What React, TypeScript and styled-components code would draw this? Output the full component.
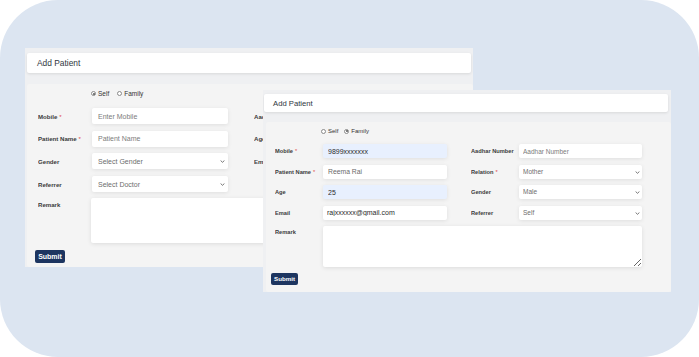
import React from "react";
import styled, { createGlobalStyle } from "styled-components";

const GlobalStyle = createGlobalStyle`
    html, body {
        margin: 0;
        padding: 0;
        background: #ffffff;
    }
    * {
        box-sizing: border-box;
    }
`;

const FONT = `"Liberation Sans", Arial, sans-serif`;

const Stage = styled.div`
    position: relative;
    width: 699px;
    height: 357px;
    overflow: hidden;
    background: #ffffff;
    font-family: ${FONT};
`;

const Backdrop = styled.div`
    width: 699px;
    height: 357px;
    border-radius: 58px;
    background: #dce5f1;
`;

const Window = styled.div<{ $left: number; $top: number; $width: number; $height: number }>`
    position: absolute;
    left: ${(p) => p.$left}px;
    top: ${(p) => p.$top}px;
    width: ${(p) => p.$width}px;
    height: ${(p) => p.$height}px;
    background: #eff0f2;
    display: flex;
    flex-direction: column;
    overflow: hidden;
`;

const Header = styled.div<{ $size: number; $height: number; $pad: number; $margin: string }>`
    flex: none;
    height: ${(p) => p.$height}px;
    margin: ${(p) => p.$margin};
    padding-left: ${(p) => p.$pad}px;
    display: flex;
    align-items: center;
    background: #ffffff;
    border-radius: 2px;
    box-shadow: 0 1px 3px rgba(0, 0, 0, 0.1);
    color: #2f3640;
    font-size: ${(p) => p.$size}px;
`;

const Body = styled.div<{ $margin: string; $pad: string }>`
    flex: 1;
    margin: ${(p) => p.$margin};
    padding: ${(p) => p.$pad};
    background: #f4f4f4;
    border-radius: 2px;
    display: flex;
    flex-direction: column;
    align-items: flex-start;
`;

const RadioRow = styled.div<{ $indent: number; $size: number; $gap: number }>`
    display: flex;
    align-items: center;
    gap: ${(p) => p.$gap}px;
    padding-left: ${(p) => p.$indent}px;
    font-size: ${(p) => p.$size}px;
    color: #333;
`;

const RadioOption = styled.label`
    display: flex;
    align-items: center;
    gap: 2px;
`;

const RadioDot = styled.span<{ $checked: boolean; $d: number }>`
    width: ${(p) => p.$d}px;
    height: ${(p) => p.$d}px;
    border-radius: 50%;
    border: 0.7px solid #8a8a8a;
    background: #fff;
    display: flex;
    align-items: center;
    justify-content: center;
    &::after {
        content: "";
        width: ${(p) => p.$d - 3}px;
        height: ${(p) => p.$d - 3}px;
        border-radius: 50%;
        background: ${(p) => (p.$checked ? "#555" : "transparent")};
    }
`;

const FormGrid = styled.div<{ $cols: string; $rowH: number; $rowGap: number; $indent: number; $top: number }>`
    display: grid;
    grid-template-columns: ${(p) => p.$cols};
    grid-auto-rows: ${(p) => p.$rowH}px;
    row-gap: ${(p) => p.$rowGap}px;
    padding-left: ${(p) => p.$indent}px;
    margin-top: ${(p) => p.$top}px;
    align-items: stretch;
`;

const Label = styled.div<{ $size: number }>`
    font-size: ${(p) => p.$size}px;
    font-weight: 700;
    color: #3b3b3b;
    white-space: nowrap;
    overflow: hidden;
    align-self: center;
`;

const RemarkLabel = styled(Label)`
    align-self: start;
    padding-top: 3px;
`;

const Req = styled.span`
    color: #e0464a;
    font-weight: 400;
    margin-left: 2px;
`;

const Field = styled.input<{ $size: number; $filled?: boolean; $pad: number; $tone?: string }>`
    width: 100%;
    height: 100%;
    border: none;
    outline: none;
    border-radius: 2px;
    padding: 0 ${(p) => p.$pad}px;
    font-family: ${FONT};
    font-size: ${(p) => p.$size}px;
    color: #2b2b2b;
    background: ${(p) => (p.$filled ? "#e8f0fe" : "#ffffff")};
    box-shadow: 0 1px 4px rgba(0, 0, 0, 0.09);
    &::placeholder {
        color: ${(p) => p.$tone ?? "#7c7c7c"};
    }
`;

const SelectWrap = styled.div`
    position: relative;
    display: flex;
    align-items: center;
    background: #ffffff;
    border-radius: 2px;
    box-shadow: 0 1px 4px rgba(0, 0, 0, 0.09);
`;

const Select = styled.select<{ $size: number; $pad: number }>`
    appearance: none;
    width: 100%;
    height: 100%;
    border: none;
    outline: none;
    padding: 1px ${(p) => p.$pad}px 0;
    line-height: 1;
    font-family: ${FONT};
    font-size: ${(p) => p.$size}px;
    color: #6d6d6d;
    background: transparent;
`;

const Chevron = styled.svg<{ $right: number }>`
    position: absolute;
    right: ${(p) => p.$right}px;
    top: calc(50% - 1px);
    pointer-events: none;
`;

const Remark = styled.textarea`
    height: 100%;
    border: none;
    outline: none;
    border-radius: 2px;
    background: #ffffff;
    box-shadow: 0 1px 4px rgba(0, 0, 0, 0.1);
    resize: vertical;
`;

const Submit = styled.button<{ $size: number; $w: number; $h: number; $left: number; $top: number }>`
    width: ${(p) => p.$w}px;
    height: ${(p) => p.$h}px;
    margin: ${(p) => p.$top}px 0 0 ${(p) => p.$left}px;
    border: none;
    border-radius: 2px;
    background: #1d3560;
    color: #ffffff;
    font-family: ${FONT};
    font-weight: 700;
    font-size: ${(p) => p.$size}px;
    padding: 0;
`;

interface SelectBoxProps {
    value: string;
    size: number;
    pad: number;
    arrowRight: number;
}

const SelectBox = (props: SelectBoxProps): JSX.Element => (
    <SelectWrap>
        <Select $size={props.size} $pad={props.pad} defaultValue={props.value}>
            <option>{props.value}</option>
        </Select>
        <Chevron $right={props.arrowRight} width="5" height="3" viewBox="0 0 5 3">
            <path d="M0.6 0.5 L2.5 2.3 L4.4 0.5" fill="none" stroke="#666" strokeWidth="0.9" />
        </Chevron>
    </SelectWrap>
);

// the "Self" form, partly hidden behind the second window
const BackForm = (): JSX.Element => {
    const ls = 6.1;
    const fs = 7;
    return (
        <Window $left={25} $top={48} $width={448} $height={219}>
            <Header $size={8.4} $height={20} $pad={10} $margin="5px 2px 0 2px">
                Add Patient
            </Header>
            <Body $margin="11px 0 0 2px" $pad="6px 0 0 0">
                <RadioRow $indent={64} $size={6.5} $gap={8}>
                    <RadioOption>
                        <RadioDot $checked $d={5} />
                        Self
                    </RadioOption>
                    <RadioOption>
                        <RadioDot $checked={false} $d={5} />
                        Family
                    </RadioOption>
                </RadioRow>
                <FormGrid $cols="54px 136px 26px 54px 136px" $rowH={16} $rowGap={6.7} $indent={11} $top={11}>
                    <Label $size={ls}>
                        Mobile<Req>*</Req>
                    </Label>
                    <Field $size={fs} $pad={6} placeholder="Enter Mobile" />
                    <span />
                    <Label $size={ls}>Aadhar Number</Label>
                    <Field $size={fs} $pad={6} placeholder="Aadhar Number" />

                    <Label $size={ls}>
                        Patient Name<Req>*</Req>
                    </Label>
                    <Field $size={fs} $pad={6} placeholder="Patient Name" />
                    <span />
                    <Label $size={ls}>Age</Label>
                    <Field $size={fs} $pad={6} placeholder="Age" />

                    <Label $size={ls}>Gender</Label>
                    <SelectBox value="Select Gender" size={fs} pad={6} arrowRight={3} />
                    <span />
                    <Label $size={ls}>Email</Label>
                    <Field $size={fs} $pad={6} placeholder="Email" />

                    <Label $size={ls}>Referrer</Label>
                    <SelectBox value="Select Doctor" size={fs} pad={6} arrowRight={3} />
                </FormGrid>
                <FormGrid $cols="53px 354px" $rowH={45} $rowGap={0} $indent={11} $top={6}>
                    <RemarkLabel $size={ls}>Remark</RemarkLabel>
                    <Remark />
                </FormGrid>
                <Submit $size={7} $w={30} $h={13} $left={8} $top={7}>
                    Submit
                </Submit>
            </Body>
        </Window>
    );
};

// the "Family" form in front
const FrontForm = (): JSX.Element => {
    const ls = 5.7;
    const fs = 7;
    return (
        <Window $left={263} $top={90} $width={408} $height={202}>
            <Header $size={7.7} $height={18} $pad={9} $margin="4px 3px 0 1px">
                Add Patient
            </Header>
            <Body $margin="10px 0 0 3px" $pad="6px 0 0 0">
                <RadioRow $indent={55} $size={6} $gap={6}>
                    <RadioOption>
                        <RadioDot $checked={false} $d={5} />
                        Self
                    </RadioOption>
                    <RadioOption>
                        <RadioDot $checked $d={5} />
                        Family
                    </RadioOption>
                </RadioRow>
                <FormGrid $cols="48px 124px 24px 48px 123px" $rowH={14} $rowGap={6.5} $indent={9} $top={10}>
                    <Label $size={ls}>
                        Mobile<Req>*</Req>
                    </Label>
                    <Field $size={fs} $pad={5} $filled defaultValue="9899xxxxxxx" />
                    <span />
                    <Label $size={ls}>Aadhar Number</Label>
                    <Field $size={6.5} $pad={4} placeholder="Aadhar Number" />

                    <Label $size={ls}>
                        Patient Name<Req>*</Req>
                    </Label>
                    <Field $size={6.8} $pad={5} $tone="#6a6a6a" placeholder="Reema Rai" />
                    <span />
                    <Label $size={ls}>
                        Relation<Req>*</Req>
                    </Label>
                    <SelectBox value="Mother" size={6.5} pad={4} arrowRight={2} />

                    <Label $size={ls}>Age</Label>
                    <Field $size={fs} $pad={5} $filled defaultValue="25" />
                    <span />
                    <Label $size={ls}>Gender</Label>
                    <SelectBox value="Male" size={6.5} pad={4} arrowRight={2} />

                    <Label $size={ls}>Email</Label>
                    <Field $size={fs} $pad={4} defaultValue="rajxxxxxx@gmail.com" />
                    <span />
                    <Label $size={ls}>Referrer</Label>
                    <SelectBox value="Self" size={6.5} pad={4} arrowRight={2} />
                </FormGrid>
                <FormGrid $cols="48px 319px" $rowH={41} $rowGap={0} $indent={9} $top={6}>
                    <RemarkLabel $size={ls}>Remark</RemarkLabel>
                    <Remark />
                </FormGrid>
                <Submit $size={6.2} $w={27} $h={12} $left={5} $top={6}>
                    Submit
                </Submit>
            </Body>
        </Window>
    );
};

const App = (): JSX.Element => {
    return (
        <>
            <GlobalStyle />
            <Stage>
                <Backdrop />
                <BackForm />
                <FrontForm />
            </Stage>
        </>
    );
};

export default App;
